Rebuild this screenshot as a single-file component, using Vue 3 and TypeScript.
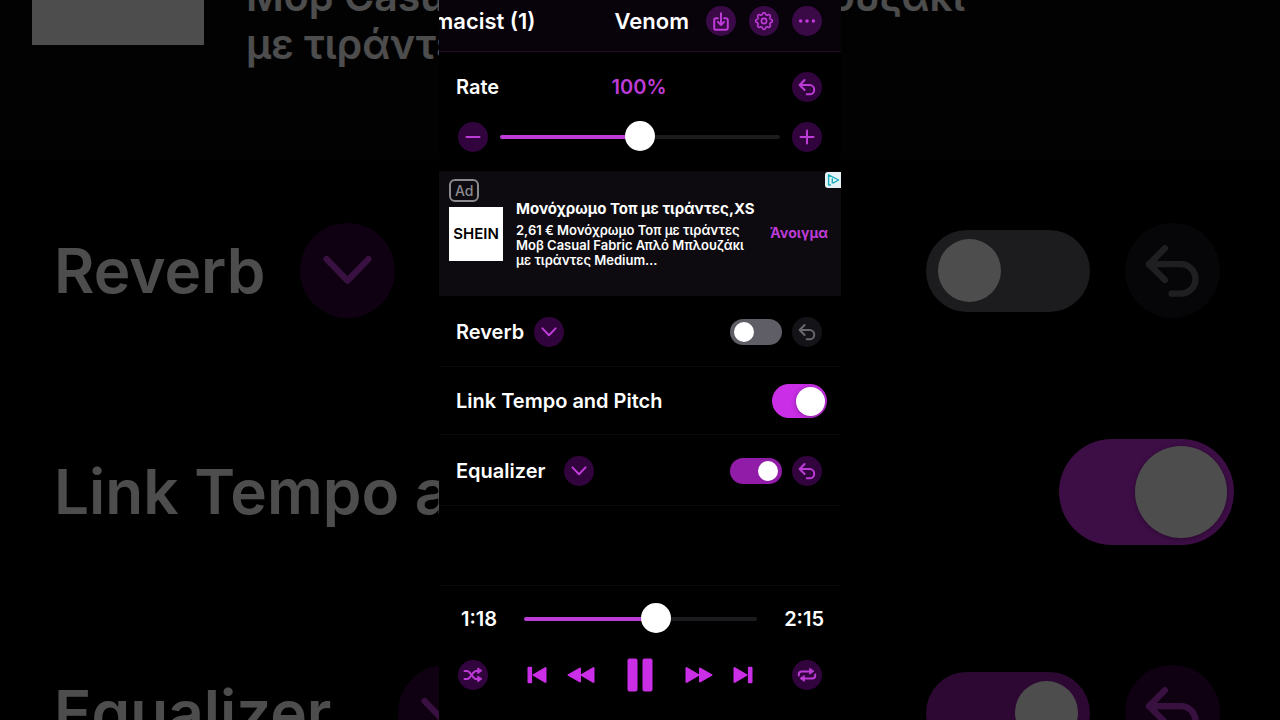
<script setup lang="ts">
import { ref } from 'vue'

const rate = ref(50)
const position = ref(78)
const duration = 135
const reverb = ref(false)
const linked = ref(true)
const equalizer = ref(true)

const icons = {
  undo: 'M12.6 8 7.6 13l5 5M7.6 13h10a4.6 4.6 0 0 1 0 9.3h-2.9',
  chevron: 'M8.4 11.4 15 18.2l6.6-6.8',
  save: 'M11.8 12.3H10a1.8 1.8 0 0 0-1.8 1.8v7.8a1.8 1.8 0 0 0 1.8 1.8h10a1.8 1.8 0 0 0 1.8-1.8v-7.8a1.8 1.8 0 0 0-1.8-1.8h-1.8M15 7.3v11.5M11.9 15.9l3.1 3.1 3.1-3.1',
  minus: 'M8.5 15h13',
  plus: 'M8.5 15h13M15 8.5v13',
  shuffle: 'M6.5 10.9h2c1.5 0 2.4.6 3.3 1.8l3.6 4.6c.9 1.2 1.8 1.8 3.3 1.8h1.6M6.5 19.1h2c1.5 0 2.4-.6 3.3-1.8l.7-.9M14.7 13.6l.7-.9c.9-1.2 1.800-1.8 3.3-1.8h1.600',
  repeat: 'M6.800 15.400v-1a3 3 0 0 1 3-3h8.700M23.200 14.600v1a3 3 0 0 1-3 3h-8.700',
}

// Outline of the settings cog: eight rounded teeth around the centre.
const gear = cog(8, 7.4, 0.9)

function cog(teeth: number, radius: number, depth: number) {
  const points: string[] = []
  for (let i = 0; i < 160; i++) {
    const a = (i / 160) * Math.PI * 2
    const r = radius + depth * Math.tanh(2 * Math.cos(a * teeth))
    points.push(`${(15 + r * Math.sin(a)).toFixed(2)} ${(15 - r * Math.cos(a)).toFixed(2)}`)
  }
  return `M${points.join('L')}Z`
}
function fill(value: number, max: number) {
  return { '--fill': `${(value / max) * 100}%` }
}
function clock(s: number) {
  return `${Math.floor(s / 60)}:${String(s % 60).padStart(2, '0')}`
}
</script>

<template>
  <div class="stage">
    <div class="backdrop" aria-hidden="true" inert>
      <div class="b-ad">
        <div class="b-logo"></div>
        <p>Μοβ Casual Fabric Απλό Μπλουζάκι<br />με τιράντες Medium…</p>
      </div>
      <div class="b-row b-reverb">
        <span>Reverb</span>
        <button class="round"><svg viewBox="0 0 30 30"><path :d="icons.chevron" /></svg></button>
        <input class="switch push" type="checkbox" aria-label="Reverb" :checked="reverb" />
        <button class="round muted"><svg viewBox="0 0 30 30"><path :d="icons.undo" /></svg></button>
      </div>
      <div class="b-row b-link">
        <span>Link Tempo and Pitch</span>
        <input class="switch large push" type="checkbox" aria-label="Link Tempo and Pitch" :checked="linked" />
      </div>
      <div class="b-row b-eq">
        <span>Equalizer</span>
        <button class="round"><svg viewBox="0 0 30 30"><path :d="icons.chevron" /></svg></button>
        <input class="switch push" type="checkbox" aria-label="Equalizer" :checked="equalizer" />
        <button class="round"><svg viewBox="0 0 30 30"><path :d="icons.undo" /></svg></button>
      </div>
    </div>

    <main class="phone">
      <header class="top">
        <div class="marquee"><span>macist (1)</span><span>Venom</span></div>
        <button class="round" aria-label="Save"><svg viewBox="0 0 30 30"><path :d="icons.save" /></svg></button>
        <button class="round" aria-label="Settings">
          <svg viewBox="0 0 30 30"><path class="thin" :d="gear" /><circle class="thin" cx="15" cy="15" r="2.6" /></svg>
        </button>
        <button class="round" aria-label="More">
          <svg viewBox="0 0 30 30" class="solid"><circle cx="8.6" cy="15" r="1.8" /><circle cx="15" cy="15" r="1.8" /><circle cx="21.4" cy="15" r="1.8" /></svg>
        </button>
      </header>

      <section class="rate">
        <div class="rate-head">
          <label for="rate">Rate</label>
          <output for="rate">{{ rate * 2 }}%</output>
          <button class="round" aria-label="Reset rate" @click="rate = 50"><svg viewBox="0 0 30 30"><path :d="icons.undo" /></svg></button>
        </div>
        <div class="rate-slide">
          <button class="round" aria-label="Decrease rate" @click="rate--"><svg viewBox="0 0 30 30"><path :d="icons.minus" /></svg></button>
          <input id="rate" v-model.number="rate" class="slider" type="range" min="0" max="100" :style="fill(rate, 100)" />
          <button class="round" aria-label="Increase rate" @click="rate++"><svg viewBox="0 0 30 30"><path :d="icons.plus" /></svg></button>
        </div>
      </section>

      <aside class="ad">
        <div class="ad-side">
          <span class="badge">Ad</span>
          <div class="logo">SHEIN</div>
        </div>
        <div class="ad-text">
          <h2>Μονόχρωμο Τοπ με τιράντες,XS</h2>
          <p>2,61 € Μονόχρωμο Τοπ με τιράντες<br />Μοβ Casual Fabric Απλό Μπλουζάκι<br />με τιράντες Medium…</p>
        </div>
        <a class="open" href="#">Άνοιγμα</a>
        <button class="choices" aria-label="AdChoices">
          <svg viewBox="0 0 16 16"><path d="M6 13H3.600V2.800L13.600 8 8 11.200M7.300 11.500V6.300" /></svg>
        </button>
      </aside>

      <section class="row tall">
        <label for="reverb">Reverb</label>
        <button class="round" aria-label="Reverb options"><svg viewBox="0 0 30 30"><path :d="icons.chevron" /></svg></button>
        <input id="reverb" v-model="reverb" class="switch push" type="checkbox" />
        <button class="round muted" aria-label="Reset reverb"><svg viewBox="0 0 30 30"><path :d="icons.undo" /></svg></button>
      </section>
      <section class="row link">
        <label for="link">Link Tempo and Pitch</label>
        <input id="link" v-model="linked" class="switch large push" type="checkbox" />
      </section>
      <section class="row tall wide">
        <label for="eq">Equalizer</label>
        <button class="round" aria-label="Equalizer options"><svg viewBox="0 0 30 30"><path :d="icons.chevron" /></svg></button>
        <input id="eq" v-model="equalizer" class="switch push" type="checkbox" />
        <button class="round" aria-label="Reset equalizer"><svg viewBox="0 0 30 30"><path :d="icons.undo" /></svg></button>
      </section>

      <footer class="player">
        <div class="progress">
          <span>{{ clock(position) }}</span>
          <input v-model.number="position" class="slider" type="range" min="0" :max="duration" aria-label="Position" :style="fill(position, duration)" />
          <span>{{ clock(duration) }}</span>
        </div>
        <div class="controls">
          <button class="round" aria-label="Shuffle">
            <svg viewBox="0 0 30 30"><path :d="icons.shuffle" /><path class="tip" d="M19.800 8.300v5.200l3.800-2.600zM19.800 16.500v5.200l3.800-2.600z" /></svg>
          </button>
          <div class="transport">
            <button class="plain" aria-label="Previous">
              <svg width="20" height="18" viewBox="0 0 20 18"><path d="M1.500 1.800h2.600v14.400H1.500zM18.500 2v14L6.500 9z" /></svg>
            </button>
            <button class="plain" aria-label="Rewind">
              <svg width="28" height="18" viewBox="0 0 28 18"><path d="M13 2.500v13L1.500 9zM26.500 2v14L14.500 9z" /></svg>
            </button>
            <button class="plain pause" aria-label="Pause">
              <svg width="26" height="34" viewBox="0 0 26 34"><rect x="1.500" y="1.500" width="8" height="31" rx="1" /><rect x="16.500" y="1.500" width="8" height="31" rx="1" /></svg>
            </button>
            <button class="plain" aria-label="Fast forward">
              <svg width="28" height="18" viewBox="0 0 28 18"><path d="M1.500 2v14l12-7zM15 2.500v13L26.500 9z" /></svg>
            </button>
            <button class="plain" aria-label="Next">
              <svg width="20" height="18" viewBox="0 0 20 18"><path d="M1.500 2v14l12-7zM15.900 1.800h2.600v14.400h-2.600z" /></svg>
            </button>
          </div>
          <button class="round" aria-label="Repeat">
            <svg viewBox="0 0 30 30"><path :d="icons.repeat" /><path class="tip" d="M17.700 8.700v5.400l3.900-2.700zM12.300 15.900v5.400l-3.900-2.700z" /></svg>
          </button>
        </div>
      </footer>
    </main>
  </div>
</template>

<style>
body {
  background: #000;
}
</style>

<style scoped>
* {
  box-sizing: border-box;
}
.stage {
  position: relative;
  display: flex;
  justify-content: center;
  min-height: 100vh;
  overflow: hidden;
  background: #000;
  color: #fff;
  font-family: Inter, "Open Sans", sans-serif;
  font-weight: 600;
}
button {
  flex: none;
  padding: 0;
  border: 0;
  background: none;
  font: inherit;
  cursor: pointer;
}
svg {
  display: block;
}
.round {
  width: 30px;
  height: 30px;
  border-radius: 50%;
  background: #32043d;
  color: #bd3bd6;
}
.round svg {
  width: 100%;
  height: 100%;
  fill: none;
  stroke: currentColor;
  stroke-width: 2;
  stroke-linecap: round;
  stroke-linejoin: round;
}
.round svg.solid {
  fill: currentColor;
  stroke: none;
}
.round .thin {
  stroke-width: 1.6;
}
.round .tip {
  fill: currentColor;
  stroke-width: 1;
}
.round.muted {
  background: #141317;
  color: #69686d;
}
.push {
  margin: 0 0 0 auto;
}
.switch {
  flex: none;
  display: flex;
  align-items: center;
  width: 52px;
  height: 26px;
  padding: 0 4px;
  border-radius: 26px;
  appearance: none;
  background: #5f5e66;
}
.switch::before {
  content: "";
  width: 20px;
  height: 20px;
  border-radius: 50%;
  background: #fff;
}
.switch:checked {
  justify-content: flex-end;
  background: #911ca8;
}
.switch.large {
  width: 55px;
  height: 34px;
  padding: 0 2px;
  border-radius: 34px;
}
.switch.large::before {
  width: 29px;
  height: 29px;
  box-shadow: 0 1px 5px rgba(0, 0, 0, 0.35);
}
.switch.large:checked {
  background: #ca2ee6;
}

/* Enlarged, dimmed copy behind the phone column */
.backdrop {
  position: absolute;
  inset: 0;
  overflow: hidden;
  opacity: 0.3;
}
.b-ad {
  display: flex;
  align-items: flex-end;
  gap: 42px;
  height: 159px;
  padding: 0 32px;
  background: #0b090c;
}
.b-logo {
  flex: none;
  width: 172px;
  height: 172px;
  margin-bottom: 114px;
  background: #fff;
}
.b-ad p {
  margin: 0 0 91px;
  font-size: 41px;
  line-height: 48px;
  white-space: nowrap;
}
.b-row {
  display: flex;
  align-items: center;
  height: 226px;
  padding: 0 60px 0 54px;
  border-bottom: 3px solid #060608;
  font-size: 62px;
  white-space: nowrap;
}
.b-row.b-link {
  height: 216px;
  padding-right: 46px;
}
.backdrop .round {
  width: 95px;
  height: 95px;
  margin-left: 35px;
}
.b-eq .round:nth-child(2) {
  margin-left: 66px;
}
.backdrop .switch {
  width: 164px;
  height: 82px;
  padding: 0 12px;
  border-radius: 82px;
}
.backdrop .switch::before {
  width: 63px;
  height: 63px;
}
.backdrop .switch.large {
  width: 175px;
  height: 106px;
  padding: 0 7px;
  border-radius: 106px;
}
.backdrop .switch.large::before {
  width: 92px;
  height: 92px;
}

.phone {
  position: relative;
  display: flex;
  flex-direction: column;
  width: 100%;
  max-width: 402px;
  background: #000;
  font-size: 20px;
  line-height: 24px;
}
.top {
  display: flex;
  align-items: center;
  gap: 13px;
  padding: 6px 19px 15px 0;
  border-bottom: 1px solid #1f0b26;
  background: #08020b;
}
.top .round {
  background: #3a0a47;
}
.marquee {
  flex: 1;
  display: flex;
  justify-content: flex-end;
  gap: 79px;
  min-width: 0;
  margin-right: 4px;
  overflow: hidden;
  font-size: 22px;
  line-height: 30px;
  white-space: nowrap;
}
.rate {
  display: flex;
  flex-direction: column;
  gap: 20px;
  padding: 20px 19px 19px 17px;
}
.rate-head {
  display: grid;
  grid-template-columns: 1fr auto 1fr;
  align-items: center;
}
.rate-head output {
  color: #bd3bd6;
}
.rate-head .round {
  justify-self: end;
}
.rate-slide {
  display: flex;
  align-items: center;
  gap: 12px;
  padding-left: 2px;
}
.slider {
  flex: 1;
  min-width: 0;
  height: 30px;
  margin: 0;
  appearance: none;
  background: none;
}
.slider::-webkit-slider-runnable-track {
  height: 4px;
  border-radius: 4px;
  background: linear-gradient(90deg, #bd3bd6 var(--fill), #1c1b1e var(--fill));
}
.slider::-webkit-slider-thumb {
  width: 30px;
  height: 30px;
  margin-top: -14px;
  border-radius: 50%;
  appearance: none;
  background: #fff;
}
.ad {
  position: relative;
  display: flex;
  align-items: flex-start;
  gap: 13px;
  min-height: 125px;
  padding: 8px 13px 10px 10px;
  background: #0d0b0f;
}
.ad-side {
  flex: none;
  display: flex;
  flex-direction: column;
  gap: 5px;
}
.badge {
  align-self: flex-start;
  padding: 0 4px;
  border: 2px solid #8b8a8d;
  border-radius: 6px;
  color: #8b8a8d;
  font-size: 14px;
  font-weight: 500;
  line-height: 19px;
}
.logo {
  width: 54px;
  padding: 17px 0;
  background: #fff;
  color: #000;
  font-size: 15px;
  line-height: 20px;
  text-align: center;
}
.ad-text {
  flex: 1;
  min-width: 0;
  padding-top: 20px;
  white-space: nowrap;
}
.ad h2 {
  margin: 0 0 4px;
  font-size: 15px;
  font-weight: 700;
  line-height: 20px;
}
.ad p {
  margin: 0;
  font-size: 13px;
  line-height: 15px;
}
.open {
  align-self: center;
  color: #bd3bd6;
  font-size: 14px;
  font-weight: 700;
  text-decoration: none;
}
.choices {
  position: absolute;
  top: 1px;
  right: 0;
  width: 16px;
  height: 16px;
  border-radius: 3px 0 0 3px;
  background: #e6f3f6;
}
.choices svg {
  fill: none;
  stroke: #16aebd;
  stroke-width: 1.4;
  stroke-linejoin: round;
}
.row {
  display: flex;
  align-items: center;
  gap: 10px;
  padding: 18px 19px 18px 17px;
  border-bottom: 1px solid #0b0a0d;
}
.tall {
  padding: 21px 19px 19px 17px;
}
.row.link {
  padding: 17px 14px 16px 17px;
}
.wide label {
  margin-right: 8px;
}
.player {
  margin-top: auto;
  padding: 18px 17px 28px 20px;
  border-top: 1px solid #0b0a0d;
}
.progress {
  display: flex;
  align-items: center;
  gap: 27px;
  padding-left: 2px;
}
.controls {
  display: flex;
  align-items: center;
  justify-content: space-between;
  margin: 24px 2px 0 -1px;
}
.transport {
  display: flex;
  align-items: center;
  gap: 20px;
}
.plain svg {
  fill: #ca2ee6;
  stroke: #ca2ee6;
  stroke-width: 2;
  stroke-linejoin: round;
}
.pause {
  margin: 0 12px;
}
</style>
